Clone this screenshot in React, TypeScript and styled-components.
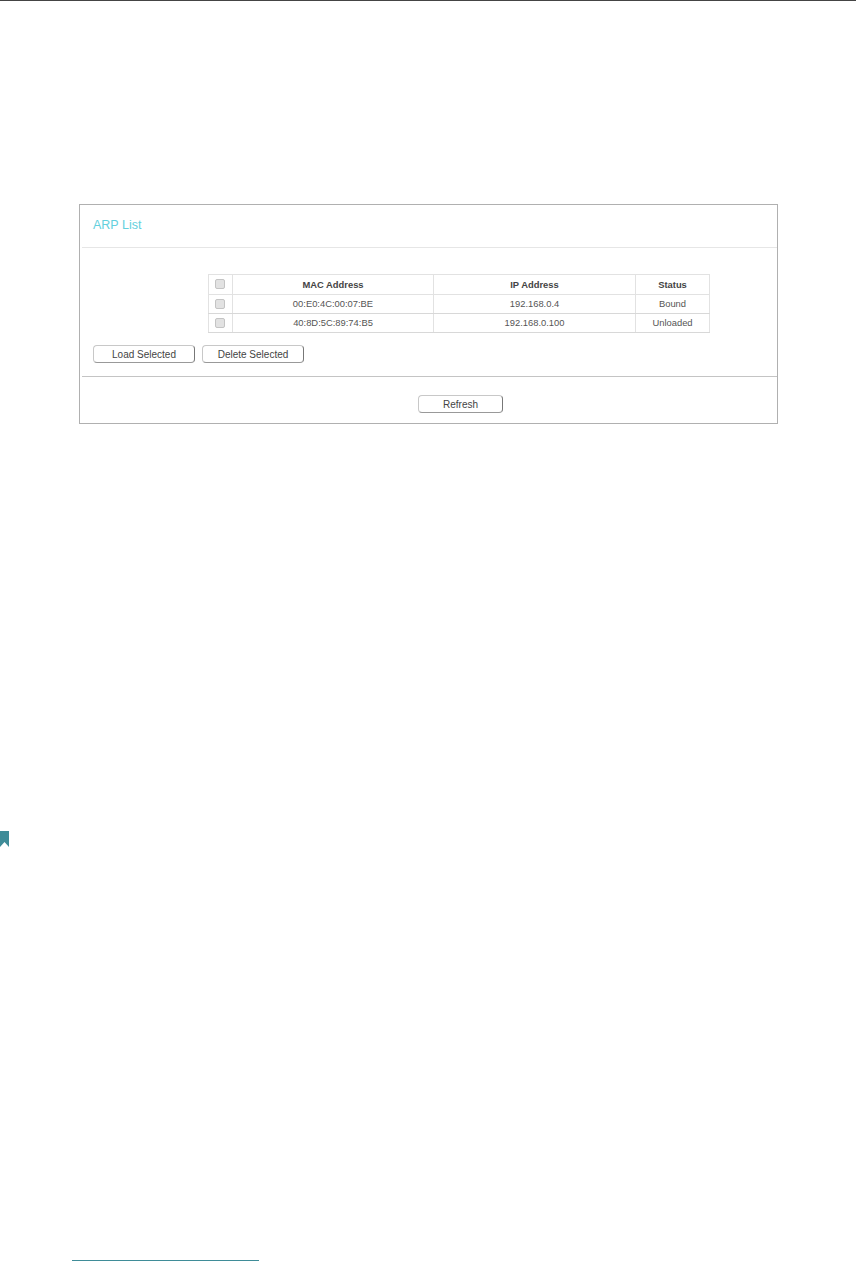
import styled, { createGlobalStyle } from "styled-components";

const GlobalStyle = createGlobalStyle`
  html, body {
    margin: 0;
    padding: 0;
    background: #fff;
    font-family: "Liberation Sans", Arial, sans-serif;
  }
`;

const rows = [
  { mac: "00:E0:4C:00:07:BE", ip: "192.168.0.4", status: "Bound" },
  { mac: "40:8D:5C:89:74:B5", ip: "192.168.0.100", status: "Unloaded" },
];

export default function App() {
  return (
    <>
      <GlobalStyle />
      <Page>
        <Panel>
          <PanelTitle>ARP List</PanelTitle>
          <PanelBody>
            <TableRow>
              <ArpTable>
                <colgroup>
                  <col width="24" />
                  <col width="201" />
                  <col width="202" />
                  <col width="74" />
                </colgroup>
                <thead>
                  <tr>
                    <Th>
                      <Check />
                    </Th>
                    <Th>MAC Address</Th>
                    <Th>IP Address</Th>
                    <Th>Status</Th>
                  </tr>
                </thead>
                <tbody>
                  {rows.map((row) => (
                    <tr key={row.mac}>
                      <Td>
                        <Check />
                      </Td>
                      <Td>{row.mac}</Td>
                      <Td>{row.ip}</Td>
                      <Td>{row.status}</Td>
                    </tr>
                  ))}
                </tbody>
              </ArpTable>
            </TableRow>
            <Actions>
              <Button $width={102}>Load Selected</Button>
              <Button $width={102}>Delete Selected</Button>
            </Actions>
          </PanelBody>
          <PanelFooter>
            <Button $width={85}>Refresh</Button>
          </PanelFooter>
        </Panel>
        <Bookmark viewBox="0 0 9 16" aria-hidden="true">
          <path d="M0 0H9V16L4.5 11L0 16Z" fill="#3f8c98" />
        </Bookmark>
        <FootnoteRule />
      </Page>
    </>
  );
}

const Page = styled.div`
  width: 856px;
  height: 1261px;
  box-sizing: border-box;
  border-top: 1px solid #444;
  padding-top: 203px;
  display: flex;
  flex-direction: column;
  overflow: hidden;
`;

const Panel = styled.section`
  width: 699px;
  height: 220px;
  margin-left: 79px;
  box-sizing: border-box;
  border: 1px solid #b0b0b0;
  display: flex;
  flex-direction: column;
`;

const PanelTitle = styled.h2`
  margin: 0 0 0 2px;
  height: 43px;
  box-sizing: border-box;
  padding: 12px 0 0 11px;
  border-bottom: 1px solid #e6e6e6;
  font-size: 12.5px;
  line-height: 16px;
  font-weight: 400;
  color: #62d0dd;
`;

const PanelBody = styled.div`
  height: 129px;
  box-sizing: border-box;
  margin-left: 2px;
  padding: 26px 0 0 11px;
  border-bottom: 1px solid #c4c4c4;
`;

const TableRow = styled.div`
  padding-left: 115px;
`;

const ArpTable = styled.table`
  width: 501px;
  table-layout: fixed;
  border-collapse: collapse;
  font-size: 9.4px;
  color: #555;
`;

const Th = styled.th`
  height: 18px;
  padding: 0 0 1px;
  border: 1px solid #e2e2e2;
  font-weight: 700;
  color: #444;
  text-align: center;
  vertical-align: middle;
`;

const Td = styled.td`
  height: 17px;
  padding: 0 0 1px;
  border: 1px solid #e2e2e2;
  border-bottom-color: #d8d8d8;
  text-align: center;
  vertical-align: middle;
`;

const Check = styled.span`
  display: block;
  width: 8px;
  height: 8px;
  margin-left: 6px;
  border: 1px solid #c4c4c4;
  border-radius: 2px;
  background: #e2e2e2;
`;

const Actions = styled.div`
  display: flex;
  gap: 7px;
  margin-top: 12px;
`;

const Button = styled.button<{ $width: number }>`
  width: ${(p) => p.$width}px;
  height: 18px;
  padding: 0;
  box-sizing: border-box;
  border: 1px solid #c8c8c8;
  border-right-color: #777;
  border-bottom-color: #999;
  border-radius: 4px;
  background: #fff;
  font-family: inherit;
  font-size: 10px;
  color: #444;
`;

const PanelFooter = styled.div`
  display: flex;
  padding: 18px 0 0 338px;
`;

const Bookmark = styled.svg`
  display: block;
  width: 9px;
  height: 16px;
  margin-top: 407px;
  flex: none;
`;

const FootnoteRule = styled.div`
  width: 187px;
  height: 1px;
  margin: 413px 0 0 72px;
  background: #3f8c98;
  flex: none;
`;
